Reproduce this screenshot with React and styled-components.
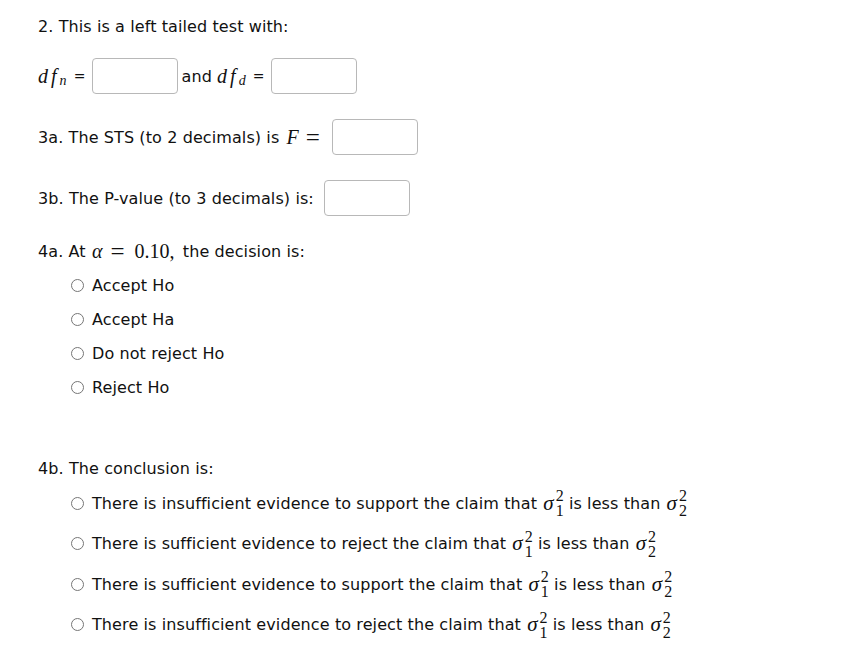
import React from "react";
import styled, { createGlobalStyle } from "styled-components";

const Global = createGlobalStyle`
  body {
    margin: 0;
    background: #fff;
    color: #111;
    font-family: "DejaVu Sans", "Liberation Sans", sans-serif;
    font-size: 16px;
    letter-spacing: 0.1px;
  }
`;

const Page = styled.div`
  padding: 16px 30px 0 38px;
  display: flex;
  flex-direction: column;
`;

const Line = styled.div`
  height: ${p => p.h || 20}px;
  margin-top: ${p => p.mt || 0}px;
  display: flex;
  align-items: center;
  white-space: nowrap;
`;

const Box = styled.input`
  width: 86px;
  height: 36px;
  box-sizing: border-box;
  border: 1px solid #b8b8b8;
  border-radius: 4px;
  background: #fff;
  margin-left: ${p => p.ml || 0}px;
  margin-right: ${p => p.mr || 0}px;
  padding: 0;
`;

// math glyphs: serif, italic unless "up"
const M = styled.span`
  font-family: "Liberation Serif", "DejaVu Serif", serif;
  font-style: ${p => (p.up ? "normal" : "italic")};
  font-size: ${p => p.size || 20}px;
  margin: 0 ${p => p.r || 0}px 0 ${p => p.l || 0}px;
  letter-spacing: ${p => p.ls || 0}px;
`;

const MathEq = styled.span`
  font-family: "Liberation Serif", "DejaVu Serif", serif;
  font-size: 25px;
  line-height: 20px;
  margin: 0 ${p => p.r}px 0 ${p => p.l}px;
  position: relative;
  top: 1px;
`;

const Eq = styled.span`
  font-size: 14px;
  margin: 0 6px 0 7px;
`;

const Script = styled.span`
  display: inline-flex;
  flex-direction: column;
  align-items: flex-start;
  font-family: "Liberation Serif", "DejaVu Serif", serif;
  font-size: 16px;
  line-height: 15px;
  margin-left: 2px;
`;

const Sub = styled.span`
  font-family: "Liberation Serif", "DejaVu Serif", serif;
  font-style: italic;
  font-size: 14px;
  position: relative;
  top: 5px;
`;

const Options = styled.div`
  display: flex;
  flex-direction: column;
  margin-top: ${p => p.mt || 0}px;
  padding-left: 33px;
`;

const Option = styled.label`
  height: ${p => p.h}px;
  display: flex;
  align-items: center;
  white-space: nowrap;
`;

const Radio = styled.span`
  width: 13px;
  height: 13px;
  box-sizing: border-box;
  border: 1px solid #767676;
  border-radius: 50%;
  margin-right: 8px;
  flex-shrink: 0;
`;

const Sigma = ({ n }) => (
  <>
    <M l={1} size={21}>σ</M>
    <Script>
      <span>2</span>
      <span>{n}</span>
    </Script>
  </>
);

const decisions = ["Accept Ho", "Accept Ha", "Do not reject Ho", "Reject Ho"];

const conclusions = [
  ["insufficient", "support"],
  ["sufficient", "reject"],
  ["sufficient", "support"],
  ["insufficient", "reject"]
];

export default function App() {
  return (
    <Page>
      <Global />
      <Line>2. This is a left tailed test with:</Line>

      <Line h={36} mt={22}>
        <M ls={3}>df</M>
        <Sub>n</Sub>
        <Eq>=</Eq>
        <Box mr={4} />
        and&nbsp;
        <M ls={3}>df</M>
        <Sub>d</Sub>
        <Eq>=</Eq>
        <Box />
      </Line>

      <Line h={36} mt={25}>
        3a. The STS (to 2 decimals) is&nbsp;
        <M l={2}>F</M>
        <MathEq l={7} r={12}>=</MathEq>
        <Box />
      </Line>

      <Line h={36} mt={25}>
        3b. The P-value (to 3 decimals) is:&nbsp;
        <Box ml={5} />
      </Line>

      <Line mt={25}>
        4a. At&nbsp;<M l={1}>α</M>
        <MathEq l={8} r={10}>=</MathEq>
        <M up r={3}>0.10,</M>&nbsp;the decision is:
      </Line>
      <Options mt={7}>
        {decisions.map(d => (
          <Option key={d} h={34}>
            <Radio />
            {d}
          </Option>
        ))}
      </Options>

      <Line mt={54}>4b. The conclusion is:</Line>
      <Options mt={5}>
        {conclusions.map(([a, b], i) => (
          <Option key={i} h={40.5}>
            <Radio />
            There is {a} evidence to {b} the claim that&nbsp;
            <Sigma n="1" />
            &nbsp;is less than&nbsp;
            <Sigma n="2" />
          </Option>
        ))}
      </Options>
    </Page>
  );
}
